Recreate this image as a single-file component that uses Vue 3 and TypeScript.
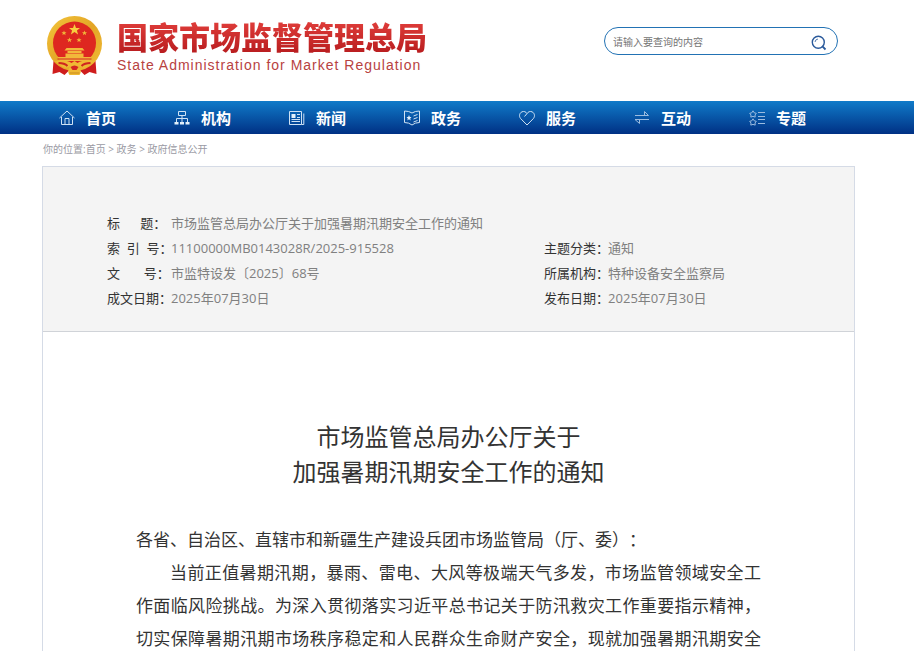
<script setup lang="ts">
import { ref } from 'vue'

interface MetaField {
  label: string
  value: string
  wide?: boolean
}

const keyword = ref('')

const navItems = [
  { id: 'home', text: '首页' },
  { id: 'org', text: '机构' },
  { id: 'news', text: '新闻' },
  { id: 'affairs', text: '政务' },
  { id: 'service', text: '服务' },
  { id: 'interact', text: '互动' },
  { id: 'topics', text: '专题' },
]

const fields: MetaField[] = [
  { label: '标      题：', value: '市场监管总局办公厅关于加强暑期汛期安全工作的通知', wide: true },
  { label: '索  引  号：', value: '11100000MB0143028R/2025-915528' },
  { label: '主题分类：', value: '通知' },
  { label: '文       号：', value: '市监特设发〔2025〕68号' },
  { label: '所属机构：', value: '特种设备安全监察局' },
  { label: '成文日期：', value: '2025年07月30日' },
  { label: '发布日期：', value: '2025年07月30日' },
]
</script>

<template>
  <div class="page">
    <header class="header wrap">
      <a class="brand" href="#">
        <svg class="emblem" viewBox="0 0 56 60" aria-hidden="true">
          <defs>
            <linearGradient id="gold" x1="0" y1="0" x2="1" y2="1">
              <stop offset="0" stop-color="#f3c63c" />
              <stop offset="0.5" stop-color="#e3a526" />
              <stop offset="1" stop-color="#f0bd35" />
            </linearGradient>
          </defs>
          <path d="M7 45 L20 48 H36 L49 45 L50 58 L43 56 L38 59 L33 54 H23 L18 59 L13 56 L6 58Z" fill="#cf1d1d" />
          <circle cx="28" cy="27.5" r="27.5" fill="url(#gold)" />
          <circle cx="28" cy="27" r="21.5" fill="#de2720" />
          <path d="M28 8 L29.5 12 H33.5 L30.4 14.5 L31.6 18.5 L28 16 L24.4 18.5 L25.6 14.5 L22.5 12 H26.5Z" fill="#f7cf3f" />
          <g fill="#f0b83a">
            <path id="small-star" d="M17.5 14.5 L18.2 16.3 H20 L18.6 17.4 L19.1 19.2 L17.5 18.1 L15.9 19.2 L16.4 17.4 L15 16.3 H16.8Z" />
            <use href="#small-star" x="20.5" />
            <use href="#small-star" x="5.5" y="7" />
            <use href="#small-star" x="15" y="7" />
          </g>
          <path d="M20 32 H36 L38 34.5 H18Z M21 35 H35 V37 H21Z M19 37.5 H37 V41 H45 L42 45 H14 L11 41 H19Z" fill="#f2b83a" />
          <path d="M11 43 H45" stroke="#d32922" stroke-width="1" />
          <path d="M8 45 Q19 43 25 47 L28 45 L31 47 Q37 43 48 45 L40 51 Q36 53 32 50 Q36 55 33 59 H23 Q20 55 24 50 Q20 53 16 51Z" fill="#efb934" />
          <path d="M12 47 Q18 47 21 50 M44 47 Q38 47 35 50" stroke="#cf2620" stroke-width="2" fill="none" />
          <path d="M24 51 Q28 48 32 51 L30 54 H26Z" fill="#d42722" />
          <path d="M23 57 H33" stroke="#c98b1d" stroke-width="1" />
        </svg>
        <span class="brand-text">
          <span class="brand-cn">国家市场监督管理总局</span>
          <span class="brand-en">State Administration for Market Regulation</span>
        </span>
      </a>
      <form class="search" @submit.prevent>
        <input v-model="keyword" type="text" placeholder="请输入要查询的内容" aria-label="请输入要查询的内容" />
        <button type="submit" aria-label="搜索">
          <svg viewBox="0 0 16 16" fill="none" stroke="#2b5a9b" aria-hidden="true">
            <circle cx="7.3" cy="7.3" r="6" stroke-width="1.4" />
            <path d="M4 7 A3.4 3.4 0 0 1 7 4" stroke-width="0.8" />
            <path d="M11.2 11.2 L14.5 14.5" stroke-width="1.8" />
          </svg>
        </button>
      </form>
    </header>

    <nav class="nav">
      <ul class="nav-list wrap">
        <li v-for="item in navItems" :key="item.id">
          <a href="#">
            <svg class="nav-icon" viewBox="0 0 16 16" aria-hidden="true">
              <g v-if="item.id === 'home'">
                <path d="M0.5 8 L8 1 L15.5 8" />
                <path d="M2.5 7 V14.5 H13.5 V7 M6 14.5 V8.5 H10 V14.5" />
              </g>
              <g v-else-if="item.id === 'org'">
                <path d="M4.5 1.5 H11.5 V5.5 H4.5Z M8 5.5 V12 M2.5 12 V8.5 H13.5 V12" />
                <path class="solid" d="M0.5 12 H4.5 V14.5 H0.5Z M6 12 H10 V14.5 H6Z M11.5 12 H15.5 V14.5 H11.5Z" />
              </g>
              <g v-else-if="item.id === 'news'">
                <path d="M0.5 1.5 H12.5 V14.5 H0.5Z M14.8 3.5 V14.5 H12.5 M8 4.5 H11 M8 7.5 H11 M2.5 9.5 H11 M2.5 11.5 H11" />
                <path class="solid" d="M2.5 4 H6.5 V8 H2.5Z" />
              </g>
              <g v-else-if="item.id === 'affairs'">
                <path d="M0.5 1 Q5 1 8 3 Q11 1 15.5 1 V12.5 Q11 12.5 8 15 Q5 12.5 0.5 12.5Z M9.5 6 L13.5 4.5 M9.5 9 L13.5 7.5 M9.5 12 L13.5 10.5" />
                <path class="solid" d="M5 5 L5.8 7 H7.5 L6.2 8.4 L6.7 10.4 L5 9.3 L3.3 10.4 L3.8 8.4 L2.5 7 H4.2Z" />
              </g>
              <path v-else-if="item.id === 'service'" d="M8 15 L1.7 8.6 C-0.4 6.2 0.5 2.9 3 1.8 C5 1 7 1.8 8 3.6 C9 1.8 11 1 13 1.8 C15.5 2.9 16.4 6.2 14.3 8.6Z M8 3.6 L5.5 6.5" />
              <g v-else-if="item.id === 'interact'" class="faint">
                <path d="M1 5.5 H14.5 L10.5 1.5 V5.5 M15 9.5 H1 L5.5 13.5 V10" />
              </g>
              <g v-else class="faint">
                <path d="M4 0.8 L5.2 2.8 L7.3 3.3 L6 5 L6.2 7.1 L4 6.4 L1.8 7.1 L2 5 L0.7 3.3 L2.8 2.8Z M4 8.8 L5.2 10.8 L7.3 11.3 L6 13 L6.2 15.1 L4 14.4 L1.8 15.1 L2 13 L0.7 11.3 L2.8 10.8Z" />
                <path d="M9 2.5 H16 M9 6.5 H16 M9 9.5 H16 M9 13.5 H16" />
              </g>
            </svg>
            <span>{{ item.text }}</span>
          </a>
        </li>
      </ul>
    </nav>

    <div class="crumbs wrap">
      <span>你的位置:</span><a href="#">首页</a> &gt; <a href="#">政务</a> &gt; <a href="#">政府信息公开</a>
    </div>

    <main class="main wrap">
      <div class="sheet">
        <dl class="meta">
          <div v-for="field in fields" :key="field.label" :class="['field', { wide: field.wide }]">
            <dt>{{ field.label }}</dt>
            <dd>{{ field.value }}</dd>
          </div>
        </dl>
        <article class="article">
          <h1>市场监管总局办公厅关于<br />加强暑期汛期安全工作的通知</h1>
          <p>各省、自治区、直辖市和新疆生产建设兵团市场监管局（厅、委）：</p>
          <p class="body-text">当前正值暑期汛期，暴雨、雷电、大风等极端天气多发，市场监管领域安全工作面临风险挑战。为深入贯彻落实习近平总书记关于防汛救灾工作重要指示精神，切实保障暑期汛期市场秩序稳定和人民群众生命财产安全，现就加强暑期汛期安全</p>
        </article>
      </div>
    </main>
  </div>
</template>

<style>
body {
  background: #fff;
}
</style>

<style scoped>
.page {
  display: flex;
  flex-direction: column;
  height: 100vh;
  overflow: hidden;
  color: #333;
  font-family: 'Open Sans', 'Noto Sans CJK SC', sans-serif;
}

.wrap {
  margin: 0;
  padding: 0 59px 0 42px;
}

a {
  color: inherit;
  text-decoration: none;
}

.header {
  display: flex;
  flex: none;
  justify-content: space-between;
  height: 101px;
}

.brand {
  display: flex;
  gap: 14px;
  padding: 14px 0 0 4px;
}

.emblem {
  width: 57px;
  height: 60px;
  margin-top: 2px;
}

.brand-text {
  display: flex;
  flex-direction: column;
}

.brand-cn {
  font: 900 31px/44px 'Noto Sans CJK SC', sans-serif;
  color: transparent;
  background: linear-gradient(#e84440, #b3181b);
  background-clip: text;
}

.brand-en {
  font: 14px/14px 'Liberation Sans', sans-serif;
  letter-spacing: 1px;
  color: #b8423f;
}

.search {
  display: flex;
  align-items: center;
  box-sizing: border-box;
  width: 234px;
  height: 28px;
  margin: 27px 17px 0 0;
  padding: 0 10px 0 8px;
  border: 1px solid #2272b4;
  border-radius: 14px;
}

.search input {
  flex: 1;
  min-width: 0;
  padding: 2px 0 0;
  border: 0;
  outline: 0;
  background: none;
  font: 10px/20px 'Noto Sans CJK SC', sans-serif;
}

.search input::placeholder {
  color: #757575;
}

.search button {
  display: flex;
  padding: 4px 0 0;
  border: 0;
  background: none;
}

.search svg {
  width: 16px;
  height: 16px;
}

.nav {
  flex: none;
  background: linear-gradient(#107bc9, #003084);
}

.nav-list {
  display: grid;
  grid-template-columns: repeat(7, 1fr);
  padding-right: 67px;
  list-style: none;
}

.nav-list a {
  display: flex;
  align-items: center;
  gap: 11px;
  height: 33px;
  padding-left: 17px;
  color: #fff;
  font-size: 15px;
  font-weight: 700;
}

.nav-icon {
  width: 16px;
  height: 16px;
  fill: none;
  stroke: #cfe2f4;
  stroke-width: 1;
}

.nav-icon .solid {
  fill: #e3f0fb;
  stroke: none;
}

.nav-icon .faint {
  stroke: #9cbce0;
}

.crumbs {
  flex: none;
  height: 32px;
  padding-left: 43px;
  color: #9a9aa4;
  font-size: 10px;
  line-height: 30px;
}

.main {
  display: flex;
  flex: 1;
  min-height: 0;
}

.sheet {
  flex: 1;
  border: 1px solid #d5dbe6;
  border-bottom: 0;
}

.meta {
  display: grid;
  grid-template-columns: 64fr 36fr;
  margin: 0;
  padding: 44px 64px 20px;
  border-bottom: 1px solid #d0d3d8;
  background: #f4f4f4;
  font-size: 13px;
  line-height: 25px;
}

.field {
  display: grid;
  grid-template-columns: 64px 1fr;
}

.wide {
  grid-column: 1 / -1;
}

.meta dt {
  white-space: pre;
}

.meta dd {
  margin: 0;
  color: #808080;
}

.article {
  padding: 87px 93px 0;
}

.article h1 {
  margin: 0 0 34px;
  font-size: 24px;
  font-weight: 400;
  line-height: 35px;
  text-align: center;
}

.article p {
  margin: 0;
  font-size: 17px;
  line-height: 33px;
  text-spacing-trim: space-all;
}

.article .body-text {
  text-align: justify;
  text-align-last: justify;
  text-indent: 2em;
}
</style>
